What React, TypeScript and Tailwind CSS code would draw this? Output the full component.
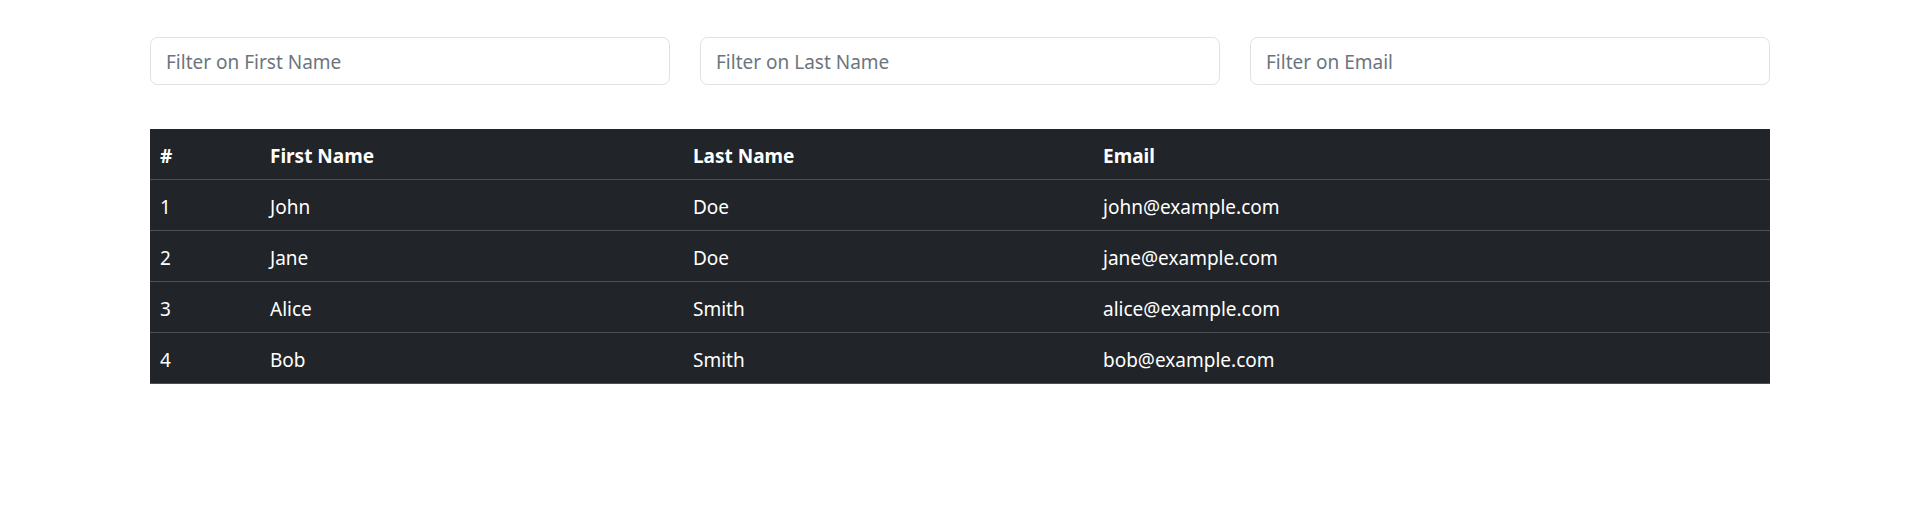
import { useState } from "react";

const users = [
  { id: 1, first: "John", last: "Doe", email: "john@example.com" },
  { id: 2, first: "Jane", last: "Doe", email: "jane@example.com" },
  { id: 3, first: "Alice", last: "Smith", email: "alice@example.com" },
  { id: 4, first: "Bob", last: "Smith", email: "bob@example.com" },
];

export default function App() {
  const [first, setFirst] = useState("");
  const [last, setLast] = useState("");
  const [email, setEmail] = useState("");

  const rows = users.filter(
    (u) =>
      u.first.toLowerCase().includes(first.toLowerCase()) &&
      u.last.toLowerCase().includes(last.toLowerCase()) &&
      u.email.toLowerCase().includes(email.toLowerCase())
  );

  const inputClass =
    "flex-1 h-[48px] px-[15px] pt-[2px] text-[19px] text-[#212529] bg-white border border-[#dee2e6] rounded-[7.5px] outline-none placeholder:text-[#6c757d]";

  return (
    <div className="min-h-screen bg-white font-['Noto_Sans','Open_Sans',sans-serif]">
      <div className="w-[1620px] mx-auto pt-[37px]">
        {/* Filters */}
        <div className="flex gap-[30px]">
          <input className={inputClass} placeholder="Filter on First Name" value={first} onChange={(e) => setFirst(e.target.value)} />
          <input className={inputClass} placeholder="Filter on Last Name" value={last} onChange={(e) => setLast(e.target.value)} />
          <input className={inputClass} placeholder="Filter on Email" value={email} onChange={(e) => setEmail(e.target.value)} />
        </div>

        {/* Table */}
        <table className="w-full mt-[44px] bg-[#212529] text-white text-[19px] leading-[30px] border-collapse text-left">
          <thead>
            <tr className="border-b border-[#4d5154]">
              <th className="w-[110px] px-[10px] pt-[12px] pb-[8px] font-bold">#</th>
              <th className="w-[423px] px-[10px] pt-[12px] pb-[8px] font-bold">First Name</th>
              <th className="w-[410px] px-[10px] pt-[12px] pb-[8px] font-bold">Last Name</th>
              <th className="px-[10px] pt-[12px] pb-[8px] font-bold">Email</th>
            </tr>
          </thead>
          <tbody>
            {rows.map((u) => (
              <tr key={u.id} className="border-b border-[#4d5154]">
                <td className="px-[10px] pt-[12px] pb-[8px]">{u.id}</td>
                <td className="px-[10px] pt-[12px] pb-[8px]">{u.first}</td>
                <td className="px-[10px] pt-[12px] pb-[8px]">{u.last}</td>
                <td className="px-[10px] pt-[12px] pb-[8px]">{u.email}</td>
              </tr>
            ))}
          </tbody>
        </table>
      </div>
    </div>
  );
}
